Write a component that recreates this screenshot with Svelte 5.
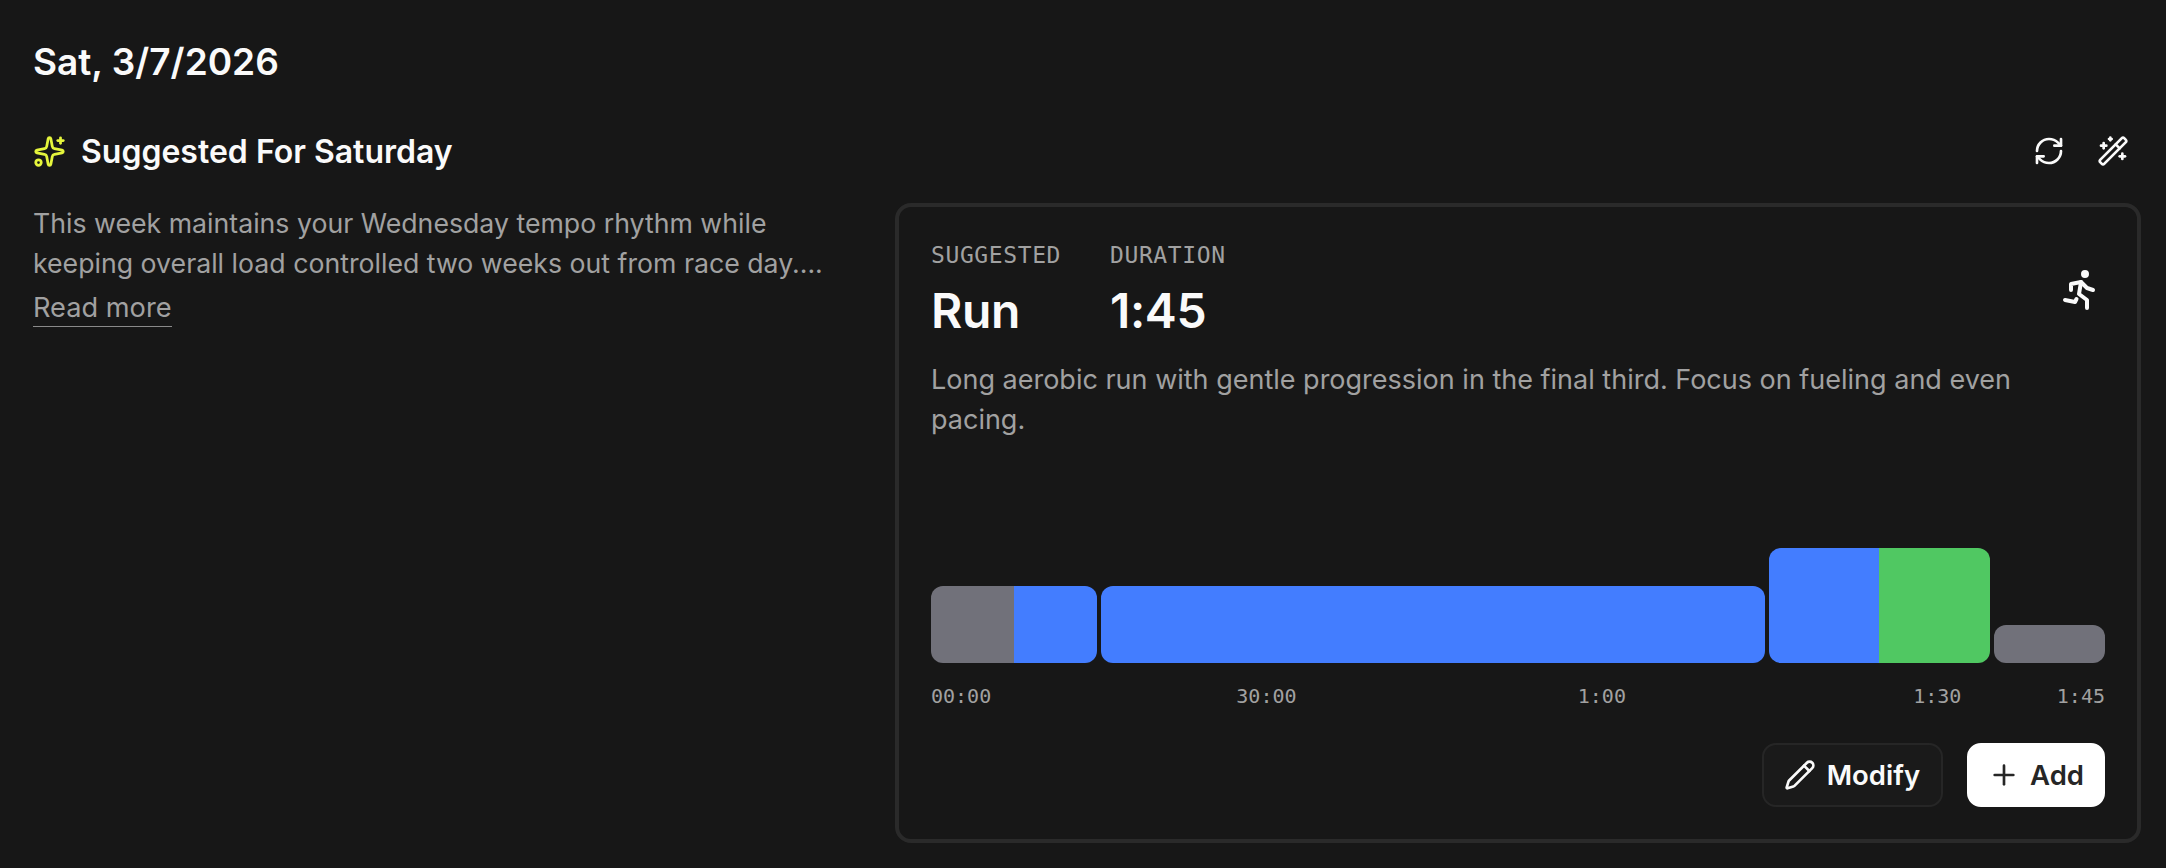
<script>
  // one block per effort group, minutes drive the widths
  const blocks = [
    { h: 77, parts: [{ min: 7.5, color: 'gray' }, { min: 7.5, color: 'blue' }] },
    { h: 77, parts: [{ min: 60, color: 'blue' }] },
    { h: 115, parts: [{ min: 9.9, color: 'blue' }, { min: 10.1, color: 'green' }] },
    { h: 38, parts: [{ min: 10, color: 'gray' }] }
  ];
  const total = 105;
  const ticks = [
    { label: '30:00', min: 30 },
    { label: '1:00', min: 60 },
    { label: '1:30', min: 90 }
  ];
  const sum = (b) => b.parts.reduce((n, p) => n + p.min, 0);
</script>

<main class="page">
  <h1>Sat, 3/7/2026</h1>

  <header class="head">
    <div class="head-title">
      <svg class="spark" viewBox="0 0 24 24" width="33" height="33">
        <path d="M11.017 2.814a1 1 0 0 1 1.966 0l1.051 5.558a2 2 0 0 0 1.594 1.594l5.558 1.051a1 1 0 0 1 0 1.966l-5.558 1.051a2 2 0 0 0-1.594 1.594l-1.051 5.558a1 1 0 0 1-1.966 0l-1.051-5.558a2 2 0 0 0-1.594-1.594l-5.558-1.051a1 1 0 0 1 0-1.966l5.558-1.051a2 2 0 0 0 1.594-1.594z" />
        <path d="M20 2v4" /><path d="M22 4h-4" /><circle cx="4" cy="20" r="2" />
      </svg>
      <h2>Suggested For Saturday</h2>
    </div>
    <div class="head-actions">
      <svg viewBox="0 0 24 24" width="32" height="32">
        <path d="M3 12a9 9 0 0 1 9-9 9.75 9.75 0 0 1 6.74 2.74L21 8" /><path d="M21 3v5h-5" />
        <path d="M21 12a9 9 0 0 1-9 9 9.75 9.75 0 0 1-6.74-2.74L3 16" /><path d="M8 16H3v5" />
      </svg>
      <svg viewBox="0 0 24 24" width="32" height="32">
        <path d="m21.64 3.64-1.28-1.28a1.21 1.21 0 0 0-1.72 0L2.36 18.64a1.21 1.21 0 0 0 0 1.72l1.28 1.28a1.2 1.2 0 0 0 1.72 0L21.64 5.36a1.2 1.2 0 0 0 0-1.72" />
        <path d="m14 7 3 3" /><path d="M5 6v4" /><path d="M19 14v4" /><path d="M10 2v2" />
        <path d="M7 8H3" /><path d="M21 16h-4" /><path d="M11 3H9" />
      </svg>
    </div>
  </header>

  <div class="columns">
    <section class="summary">
      <p>This week maintains your Wednesday tempo rhythm while keeping overall load controlled two weeks out from race day....</p>
      <span class="more">Read more</span>
    </section>

    <section class="card">
      <div class="card-top">
        <div class="stats">
          <div>
            <div class="label">SUGGESTED</div>
            <div class="value">Run</div>
          </div>
          <div>
            <div class="label">DURATION</div>
            <div class="value">1:45</div>
          </div>
        </div>
        <svg class="run" viewBox="0 0 24 24" width="48" height="48">
          <path d="M13 4a1 1 0 1 0 2 0a1 1 0 1 0 -2 0" />
          <path d="M4 17l5 1l.75 -1.5" /><path d="M15 21l0 -4l-4 -3l1 -6" /><path d="M7 12l0 -3l5 -1l3 3l3 1" />
        </svg>
      </div>
      <p class="desc">Long aerobic run with gentle progression in the final third. Focus on fueling and even pacing.</p>

      <div class="chart">
        {#each blocks as b}
          <div class="block" style="flex: {sum(b)} 1 0; height: {b.h}px">
            {#each b.parts as p}
              <div class="part {p.color}" style="flex: {p.min} 1 0"></div>
            {/each}
          </div>
        {/each}
      </div>

      <div class="times">
        <span class="start">00:00</span>
        {#each ticks as t}
          <span class="tick" style="left: {(t.min / total) * 100}%">{t.label}</span>
        {/each}
        <span class="end">1:45</span>
      </div>

      <div class="actions">
        <button class="btn ghost">
          <svg viewBox="0 0 24 24" width="32" height="32">
            <path d="M21.174 6.812a1 1 0 0 0-3.986-3.987L3.842 16.174a2 2 0 0 0-.5.83l-1.321 4.352a.5.5 0 0 0 .623.622l4.353-1.32a2 2 0 0 0 .83-.497z" />
            <path d="m15 5 4 4" />
          </svg>
          Modify
        </button>
        <button class="btn solid">
          <svg viewBox="0 0 24 24" width="32" height="32">
            <path d="M5 12h14" /><path d="M12 5v14" />
          </svg>
          Add
        </button>
      </div>
    </section>
  </div>
</main>

<style>
  :global(body) {
    background: #171717;
    color: #fafafa;
    font-family: Inter, "Liberation Sans", sans-serif;
  }

  svg {
    fill: none;
    stroke: currentColor;
    stroke-width: 2;
    stroke-linecap: round;
    stroke-linejoin: round;
    flex: none;
  }

  .page {
    padding: 40px 25px 25px 33px;
  }

  h1 {
    margin: 0;
    font-size: 37px;
    line-height: 44px;
    font-weight: 600;
  }

  .head {
    display: flex;
    justify-content: space-between;
    align-items: center;
    margin-top: 45px;
    height: 44px;
  }

  .head-title {
    display: flex;
    align-items: center;
    gap: 15px;
  }

  .spark {
    color: #e5f53c;
  }

  h2 {
    margin: 0;
    font-size: 32px;
    font-weight: 600;
  }

  .head-actions {
    display: flex;
    gap: 32px;
    padding-right: 12px;
  }

  .columns {
    display: flex;
    gap: 62px;
    margin-top: 30px;
  }

  .summary {
    flex: 0 0 800px;
    color: #a1a1a1;
    font-size: 26.7px;
    line-height: 40px;
  }

  .summary p {
    margin: 0;
  }

  .more {
    display: inline-block;
    font-size: 27.2px;
    line-height: 36px;
    margin-top: 7px;
    border-bottom: 1px solid #8a8a8a;
  }

  .card {
    flex: 1;
    box-sizing: border-box;
    height: 640px;
    padding: 32px;
    border: 4px solid #2a2a2a;
    border-radius: 16px;
    display: flex;
    flex-direction: column;
  }

  .card-top {
    display: flex;
    justify-content: space-between;
    align-items: center;
  }

  .stats {
    display: flex;
    gap: 49px;
  }

  .label {
    font-family: "DejaVu Sans Mono", monospace;
    font-size: 23px;
    letter-spacing: 0.6px;
    line-height: 32px;
    color: #a1a1a1;
  }

  .value {
    margin-top: 12px;
    font-size: 48px;
    letter-spacing: -0.4px;
    line-height: 56px;
    font-weight: 600;
  }

  .run {
    margin-top: 2px;
  }

  .desc {
    margin: 21px 0 0;
    color: #a1a1a1;
    font-size: 27px;
    line-height: 40px;
  }

  .chart {
    display: flex;
    align-items: flex-end;
    gap: 4px;
    margin-top: auto;
  }

  .block {
    display: flex;
    border-radius: 12px;
    overflow: hidden;
  }

  .gray { background: #71717a; }
  .blue { background: #437dff; }
  .green { background: #50c862; }

  .times {
    position: relative;
    margin-top: 19px;
    height: 28px;
    display: flex;
    justify-content: space-between;
    font-family: "DejaVu Sans Mono", monospace;
    font-size: 20px;
    line-height: 28px;
    color: #a1a1a1;
  }

  .tick {
    position: absolute;
    transform: translateX(-50%);
  }

  .actions {
    display: flex;
    justify-content: flex-end;
    gap: 24px;
    margin-top: 33px;
  }

  .btn {
    display: flex;
    align-items: center;
    height: 64px;
    box-sizing: border-box;
    border-radius: 14px;
    font-family: inherit;
    font-size: 27.5px;
    font-weight: 600;
  }

  .ghost {
    gap: 11px;
    padding: 0 21px 0 20px;
    background: #1a1a1a;
    border: 2px solid #262626;
    color: #fafafa;
  }

  .solid {
    gap: 10px;
    padding: 0 19px;
    background: #fff;
    border: 2px solid #fff;
    color: #262626;
  }
</style>
